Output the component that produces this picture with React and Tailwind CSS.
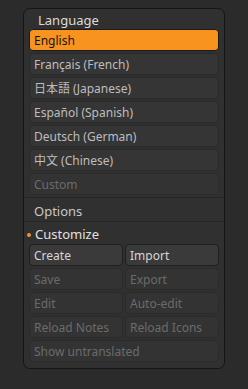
import React from "react";

const font = { fontFamily: '"Noto Sans", "Noto Sans CJK JP", sans-serif' };

function Btn({ children, active, disabled, strong }) {
  let cls =
    "h-[22px] rounded-[4px] border flex items-center pl-[4px] pt-[1px] text-[12px] leading-none whitespace-nowrap ";
  if (active) cls += "bg-[#f7931e] border-[#1a1a1a] text-[#151515]";
  else if (strong) cls += "bg-[#3a3a3a] border-[#1f1f1f] text-[#d6d6d6]";
  else if (disabled) cls += "bg-[#333333] border-[#2b2b2b] text-[#6b6b6b]";
  else cls += "bg-[#353535] border-[#2a2a2a] text-[#bdbdbd]";
  return <div className={cls}>{children}</div>;
}

export default function App() {
  return (
    <div className="w-[248px] h-[389px] bg-[#2b2b2b] pt-[8px] pl-[23px]" style={font}>
      <div className="w-[202px] h-[361px] rounded-[7px] border border-[#151515] bg-[#303030] flex flex-col">
        <div className="h-[20px] pl-[14px] pt-[4px] text-[13px] text-[#dcdcdc] leading-[14px]">Language</div>
        <div className="flex flex-col gap-[2px] px-[5px]">
          <Btn active>English</Btn>
          <Btn>Français (French)</Btn>
          <Btn>日本語 (Japanese)</Btn>
          <Btn>Español (Spanish)</Btn>
          <Btn>Deutsch (German)</Btn>
          <Btn>中文 (Chinese)</Btn>
          <Btn disabled>Custom</Btn>
        </div>
        <div className="mt-[2px] border-t border-[#262626] h-[24px] flex items-center pt-[4px] pl-[10px] text-[13px] text-[#c8c8c8]">
          Options
        </div>
        <div className="border-t border-[#262626] h-[23px] flex items-center pt-[4px] pl-[3px] text-[13px] text-[#e0e0e0]">
          <span className="w-[4px] h-[4px] rounded-full bg-[#f7931e] mr-[4px]"></span>
          Customize
        </div>
        <div className="grid grid-cols-2 gap-x-[2px] gap-y-[2px] px-[5px]">
          <Btn strong>Create</Btn>
          <Btn strong>Import</Btn>
          <Btn disabled>Save</Btn>
          <Btn disabled>Export</Btn>
          <Btn disabled>Edit</Btn>
          <Btn disabled>Auto-edit</Btn>
          <Btn disabled>Reload Notes</Btn>
          <Btn disabled>Reload Icons</Btn>
          <div className="col-span-2">
            <Btn disabled>Show untranslated</Btn>
          </div>
        </div>
      </div>
    </div>
  );
}
